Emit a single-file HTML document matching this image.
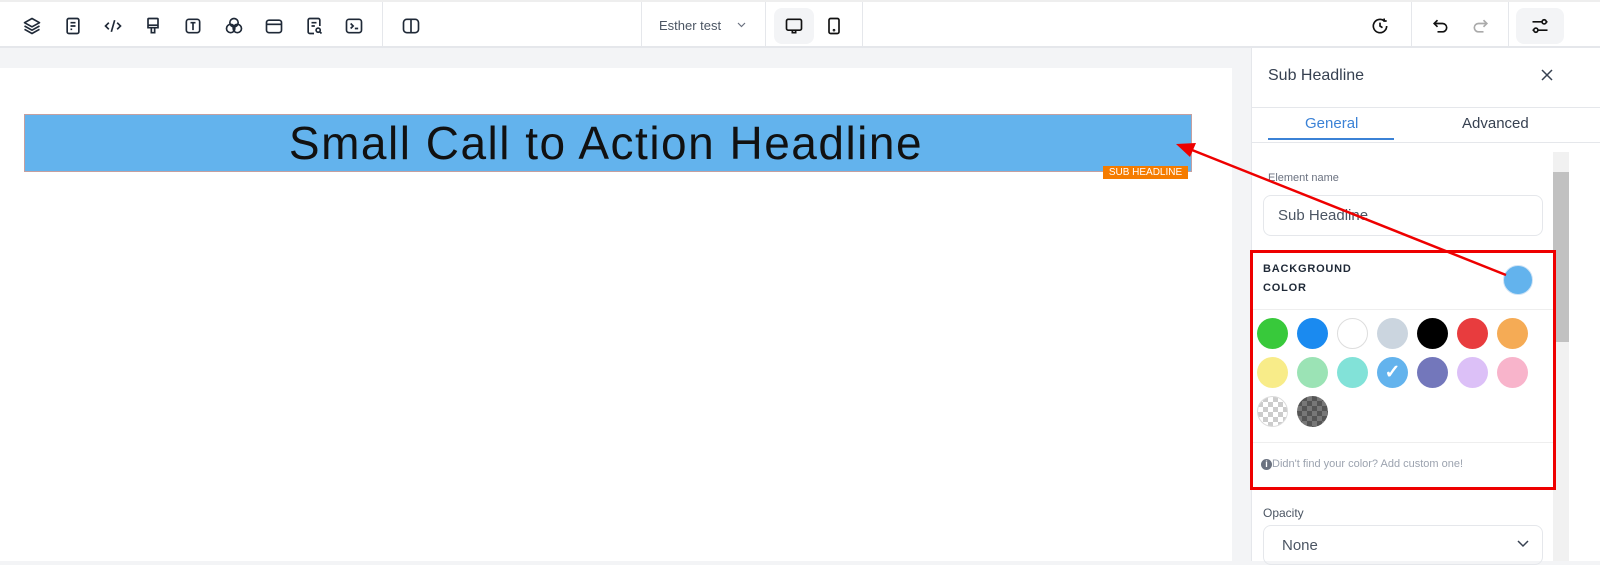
<!DOCTYPE html>
<html><head><meta charset="utf-8"><style>
*{box-sizing:border-box;margin:0;padding:0}
body{width:1600px;height:561px;overflow:hidden;background:#f3f4f6;font-family:"Liberation Sans",sans-serif;position:relative}
.top{position:absolute;left:0;top:0;width:1600px;height:48px;background:#fff;border-top:2px solid #eee;border-bottom:2px solid #e5e7eb}
.ic{position:absolute;top:14px;width:20px;height:20px}
.vs{position:absolute;top:0;width:1px;height:46px;background:#e5e7eb}
.canvas{position:absolute;left:0;top:68px;width:1232px;height:493px;background:#fff}
.panel{position:absolute;left:1251px;top:48px;width:349px;height:513px;background:#fff;border-left:1px solid #e5e7eb}
.sw{position:absolute;width:31px;height:31px;border-radius:50%}
</style></head><body>
<div class="top">
<svg class="ic" style="left:22px" viewBox="0 0 24 24" fill="none" stroke="#1f2937" stroke-width="2" stroke-linejoin="round"><path d="M12 3 3 8l9 5 9-5z"/><path d="M3 12l9 5 9-5"/><path d="M3 16l9 5 9-5"/></svg>
<svg class="ic" style="left:63px" viewBox="0 0 24 24" fill="none" stroke="#1f2937" stroke-width="2"><rect x="5" y="3" width="14" height="18" rx="2"/><path d="M9 8h6M9 12h6M9 16h2"/></svg>
<svg class="ic" style="left:103px" viewBox="0 0 24 24" fill="none" stroke="#1f2937" stroke-width="2"><path d="M7 8l-4 4 4 4M17 8l4 4-4 4M14 5l-4 14"/></svg>
<svg class="ic" style="left:143px" viewBox="0 0 24 24" fill="none" stroke="#1f2937" stroke-width="2"><rect x="6" y="3" width="12" height="8" rx="1"/><path d="M6 11v3h12v-3M10 14v6h4v-6"/></svg>
<svg class="ic" style="left:183px" viewBox="0 0 24 24" fill="none" stroke="#1f2937" stroke-width="2"><rect x="4" y="4" width="16" height="16" rx="3"/><path d="M9 8h6M12 8v9"/></svg>
<svg class="ic" style="left:224px" viewBox="0 0 24 24" fill="none" stroke="#1f2937" stroke-width="2"><circle cx="12" cy="8" r="5"/><circle cx="8" cy="15" r="5"/><circle cx="16" cy="15" r="5"/></svg>
<svg class="ic" style="left:264px" viewBox="0 0 24 24" fill="none" stroke="#1f2937" stroke-width="2"><rect x="3" y="5" width="18" height="15" rx="3"/><path d="M3 10h18"/></svg>
<svg class="ic" style="left:304px" viewBox="0 0 24 24" fill="none" stroke="#1f2937" stroke-width="2"><path d="M12 21H7a2 2 0 0 1-2-2V5a2 2 0 0 1 2-2h10a2 2 0 0 1 2 2v7"/><path d="M9 8h6M9 12h4"/><circle cx="17" cy="17" r="2.5"/><path d="M19 19l2 2"/></svg>
<svg class="ic" style="left:344px" viewBox="0 0 24 24" fill="none" stroke="#1f2937" stroke-width="2"><rect x="3" y="4" width="18" height="16" rx="3"/><path d="M8 9l3 3-3 3M13 15h4"/></svg>
<div class="vs" style="left:382px"></div>
<svg class="ic" style="left:401px" viewBox="0 0 24 24" fill="none" stroke="#1f2937" stroke-width="2"><rect x="3" y="4" width="18" height="16" rx="4"/><path d="M12 4v16"/></svg>
<div class="vs" style="left:641px"></div>
<div style="position:absolute;left:659px;top:16px;font-size:13px;color:#4b5563">Esther test</div>
<svg style="position:absolute;left:737px;top:20px" width="9" height="6" viewBox="0 0 9 6" fill="none" stroke="#6b7280" stroke-width="1.2"><path d="M1 1l3.5 3.5L8 1"/></svg>
<div class="vs" style="left:765px"></div>
<div style="position:absolute;left:774px;top:6px;width:40px;height:36px;border-radius:8px;background:#f3f4f6"></div>
<svg class="ic" style="left:784px" viewBox="0 0 24 24" fill="none" stroke="#111" stroke-width="2"><rect x="3" y="4" width="18" height="13" rx="2"/><path d="M10 17v3h4v-3"/></svg>
<svg class="ic" style="left:824px" viewBox="0 0 24 24" fill="none" stroke="#111" stroke-width="2"><rect x="6" y="3" width="12" height="18" rx="2"/><circle cx="12" cy="17" r=".6"/></svg>
<div class="vs" style="left:862px"></div>
<svg class="ic" style="left:1370px" viewBox="0 0 24 24" fill="none" stroke="#111" stroke-width="2"><path d="M20 12a8 8 0 1 1-3-6.2"/><path d="M12 8v4l3 2M17 3v3h3"/></svg>
<div class="vs" style="left:1411px"></div>
<svg class="ic" style="left:1430px" viewBox="0 0 24 24" fill="none" stroke="#111" stroke-width="2"><path d="M9 5L5 9l4 4"/><path d="M5 9h10a5 5 0 0 1 0 10H9"/></svg>
<svg class="ic" style="left:1471px" viewBox="0 0 24 24" fill="none" stroke="#aaa" stroke-width="2"><path d="M15 5l4 4-4 4"/><path d="M19 9H9a5 5 0 0 0 0 10h6"/></svg>
<div class="vs" style="left:1508px"></div>
<div style="position:absolute;left:1516px;top:6px;width:48px;height:36px;border-radius:8px;background:#f3f4f6"></div>
<svg class="ic" style="left:1530px" viewBox="0 0 24 24" fill="none" stroke="#111" stroke-width="2"><circle cx="17" cy="7" r="2.5"/><circle cx="7" cy="17" r="2.5"/><path d="M3 7h11.5M19.5 7H21M3 17h1.5M9.5 17H21"/></svg>
</div>
<div class="canvas"></div>
<div style="position:absolute;left:24px;top:114px;width:1168px;height:58px;background:#63b3ed;border:1px solid #c4a0a0;text-align:center;font-size:46px;line-height:56px;color:#111;letter-spacing:1.5px;padding-right:4px">Small Call to Action Headline</div>
<div style="position:absolute;left:1103px;top:166px;width:85px;height:13px;background:#f57c00;color:#fff;font-size:10px;line-height:13px;text-align:center">SUB HEADLINE</div>
<div class="panel">
<div style="position:absolute;left:16px;top:19px;font-size:16px;color:#374151">Sub Headline</div>
<svg style="position:absolute;left:289px;top:21px" width="12" height="12" viewBox="0 0 12 12" stroke="#374151" stroke-width="1.5"><path d="M1 1l10 10M11 1L1 11"/></svg>
<div style="position:absolute;left:0;top:59px;width:349px;height:1px;background:#e5e7eb"></div>
<div style="position:absolute;left:53px;top:67px;font-size:15px;color:#3b82d6">General</div>
<div style="position:absolute;left:210px;top:67px;font-size:15px;color:#374151">Advanced</div>
<div style="position:absolute;left:16px;top:90px;width:126px;height:2px;background:#3b82d6"></div>
<div style="position:absolute;left:0;top:94px;width:349px;height:1px;background:#e5e7eb"></div>
<div style="position:absolute;left:301px;top:104px;width:16px;height:409px;background:#f1f1f1"></div>
<div style="position:absolute;left:301px;top:124px;width:16px;height:170px;background:#c1c1c1"></div>
<div style="position:absolute;left:16px;top:124px;font-size:11px;color:#6b7280">Element name</div>
<div style="position:absolute;left:11px;top:147px;width:280px;height:41px;border:1px solid #e5e7eb;border-radius:8px;font-size:15px;color:#4b5563;padding:11px 0 0 14px">Sub Headline</div>
<div style="position:absolute;left:-2px;top:202px;width:306px;height:240px;border:3px solid #e00;"></div>
<div style="position:absolute;left:11px;top:212px;font-size:11px;font-weight:bold;color:#1f2937;letter-spacing:.8px;line-height:19px">BACKGROUND<br>COLOR</div>
<div style="position:absolute;left:251px;top:217px;width:30px;height:30px;border-radius:50%;background:#63b3ed;border:1px solid #cfe3f5"></div>
<div style="position:absolute;left:1px;top:261px;width:300px;height:1px;background:#eee"></div>
<div style="position:absolute;left:1px;top:394px;width:300px;height:1px;background:#eee"></div>
<div style="position:absolute;left:9px;top:410px;font-size:11px;color:#9ca3af"><span style="display:inline-block;width:11px;height:11px;border-radius:50%;background:#6b7280;color:#fff;font-size:9px;text-align:center;line-height:11px;font-weight:bold">i</span>Didn't find your color? Add custom one!</div>
<div style="position:absolute;left:11px;top:458px;font-size:12px;color:#4b5563">Opacity</div>
<div style="position:absolute;left:11px;top:477px;width:280px;height:40px;border:1px solid #e5e7eb;border-radius:8px;font-size:15px;color:#4b5563;padding:11px 0 0 18px">None</div>
<svg style="position:absolute;left:265px;top:492px" width="12" height="8" viewBox="0 0 12 8" fill="none" stroke="#374151" stroke-width="1.5"><path d="M1 1l5 5 5-5"/></svg>
</div>
<div class="sw" style="left:1257px;top:318px;background:#38c93b"></div>
<div class="sw" style="left:1297px;top:318px;background:#1a8af0"></div>
<div class="sw" style="left:1337px;top:318px;background:#fff;border:1px solid #ddd"></div>
<div class="sw" style="left:1377px;top:318px;background:#cbd5df"></div>
<div class="sw" style="left:1417px;top:318px;background:#000"></div>
<div class="sw" style="left:1457px;top:318px;background:#e83c3e"></div>
<div class="sw" style="left:1497px;top:318px;background:#f5ab55"></div>
<div class="sw" style="left:1257px;top:357px;background:#f8ec89"></div>
<div class="sw" style="left:1297px;top:357px;background:#9be3b5"></div>
<div class="sw" style="left:1337px;top:357px;background:#82e2d8"></div>
<div class="sw" style="left:1377px;top:357px;background:#63b3ed;color:#fff;text-align:center;font-size:19px;line-height:31px;font-weight:bold">✓</div>
<div class="sw" style="left:1417px;top:357px;background:#7377bb"></div>
<div class="sw" style="left:1457px;top:357px;background:#dcc0f7"></div>
<div class="sw" style="left:1497px;top:357px;background:#f8b4cb"></div>
<div class="sw" style="left:1257px;top:396px;border:1px solid #ddd;background:repeating-conic-gradient(#ccc 0 25%,#fff 0 50%) 0 0/10px 10px"></div>
<div class="sw" style="left:1297px;top:396px;background:repeating-conic-gradient(#555 0 25%,#777 0 50%) 0 0/10px 10px"></div>
<svg style="position:absolute;left:0;top:0" width="1600" height="561"><line x1="1506" y1="275" x2="1192" y2="150" stroke="#e00" stroke-width="2.5"/><path d="M1176 144l20-1-6 14z" fill="#e00"/></svg>
</body></html>
